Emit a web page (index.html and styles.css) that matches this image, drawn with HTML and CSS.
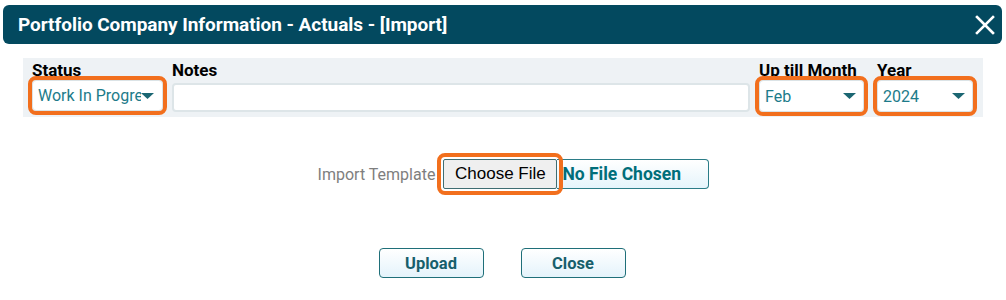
FILE: index.html
```html
<!DOCTYPE html>
<html lang="en">
<head>
  <meta charset="UTF-8">
  <meta name="viewport" content="width=device-width, initial-scale=1.0">
  <title>Portfolio Company Information - Actuals - [Import]</title>
  <link rel="stylesheet" href="styles.css">
</head>
<body>
  <div class="dialog">
    <!-- Title bar -->
    <div class="dialog-header">
      <span class="dialog-title">Portfolio Company Information - Actuals - [Import]</span>
      <button class="dialog-close" title="Close">
        <svg width="20" height="20" viewBox="0 0 20 20">
          <path d="M2 2 L18 18 M18 2 L2 18" stroke="#fff" stroke-width="2.6" stroke-linecap="square"/>
        </svg>
      </button>
    </div>

    <!-- Filters -->
    <div class="filter-panel">
      <div class="field field-status">
        <label class="field-label">Status</label>
        <div class="dropdown highlight status-dropdown">
          <span class="dropdown-text">Work In Progress</span>
          <svg class="dropdown-arrow" width="13" height="6" viewBox="0 0 13 6"><path d="M0 0 H13 L6.5 6 Z"/></svg>
        </div>
      </div>
      <div class="field field-notes">
        <label class="field-label">Notes</label>
        <input class="notes-input" type="text">
      </div>
      <div class="field field-month">
        <label class="field-label">Up till Month</label>
        <div class="dropdown highlight">
          <span class="dropdown-text">Feb</span>
          <svg class="dropdown-arrow" width="13" height="6" viewBox="0 0 13 6"><path d="M0 0 H13 L6.5 6 Z"/></svg>
        </div>
      </div>
      <div class="field field-year">
        <label class="field-label">Year</label>
        <div class="dropdown highlight">
          <span class="dropdown-text">2024</span>
          <svg class="dropdown-arrow" width="13" height="6" viewBox="0 0 13 6"><path d="M0 0 H13 L6.5 6 Z"/></svg>
        </div>
      </div>
    </div>

    <!-- File picker -->
    <div class="import-row">
      <span class="import-label">Import Template</span>
      <div class="file-picker">
        <button class="file-button highlight">Choose File</button>
        <span class="file-name">No File Chosen</span>
      </div>
    </div>

    <!-- Actions -->
    <div class="actions">
      <button class="action-button">Upload</button>
      <button class="action-button">Close</button>
    </div>
  </div>
</body>
</html>
```

FILE: styles.css
```css
body {
  margin: 0;
  padding: 0;
  font-family: Roboto, "Liberation Sans", Arial, sans-serif;
  background: #fff;
}
.dialog {
  width: 1006px;
  height: 300px;
  padding-top: 5px;
  box-sizing: border-box;
}
.dialog-header {
  display: flex;
  align-items: center;
  justify-content: space-between;
  height: 39px;
  margin: 0 4px 0 3px;
  padding: 0 7px 0 15px;
  background: #03495f;
  border-radius: 6px;
}
.dialog-title {
  color: #fff;
  font-size: 19px;
  font-weight: 700;
  letter-spacing: -0.05px;
}
.dialog-close {
  display: flex;
  padding: 0;
  border: none;
  background: none;
  cursor: pointer;
}
.highlight {
  outline: 4px solid #f26f1d;
  outline-offset: 0;
  border-radius: 4px;
}
.filter-panel {
  display: flex;
  gap: 9px;
  margin: 14px 23px 0;
  padding: 5px 10px 5px 9px;
  background: #eef2f5;
}
.field {
  display: flex;
  flex-direction: column;
}
.field-label {
  display: block;
  height: 14px;
  line-height: 14px;
  font-size: 17px;
  font-weight: 700;
  color: #000;
  white-space: nowrap;
}
.field-status { width: 131px; }
.field-notes { flex: 1; }
.field-month { width: 105px; }
.field-year { width: 96px; margin-left: 4px; }
.dropdown {
  display: flex;
  align-items: center;
  height: 32px;
  margin-top: 3px;
  padding: 0 7px 0 5px;
  box-sizing: border-box;
  background: #fff;
  border: 1px solid #dbe3e6;
}
.status-dropdown {
  height: 31px;
  padding-right: 8px;
}
.dropdown-text {
  flex: 1;
  overflow: hidden;
  white-space: nowrap;
  font-size: 16px;
  color: #1d7b8a;
}
.dropdown-arrow {
  flex: none;
  fill: #1b6672;
}
.notes-input {
  height: 29px;
  margin-top: 6px;
  padding: 0 6px;
  box-sizing: border-box;
  border: 2px solid #dde5e8;
  border-radius: 4px;
  background: #fff;
  font: inherit;
  outline: none;
}
.import-row {
  display: flex;
  align-items: center;
  justify-content: center;
  margin-top: 42px;
  padding-left: 21px;
}
.import-label {
  font-size: 16px;
  color: #7e7e7e;
  margin-right: 8px;
}
.file-picker {
  display: flex;
  align-items: stretch;
  height: 30px;
}
.file-button {
  width: 114px;
  padding: 0;
  background: #efefef;
  border: 1px solid #3f6d72;
  border-radius: 2px;
  outline-offset: 2px;
  font-family: "Liberation Sans", Arial, sans-serif;
  font-size: 17px;
  color: #000;
  position: relative;
  z-index: 1;
}
.file-name {
  display: flex;
  align-items: center;
  width: 152px;
  padding-left: 5px;
  box-sizing: border-box;
  border: 1px solid #2b7c87;
  border-left: none;
  border-radius: 0 4px 4px 0;
  background: linear-gradient(#fff, #e5f4fb);
  font-size: 17.5px;
  font-weight: 700;
  color: #006e7a;
}
.actions {
  display: flex;
  justify-content: center;
  gap: 37px;
  margin-top: 59px;
  padding-right: 2px;
}
.action-button {
  width: 105px;
  height: 30px;
  padding: 0;
  border: 1px solid #1f6f79;
  border-radius: 4px;
  background: linear-gradient(#fff, #e4f3fb);
  font-family: Roboto, sans-serif;
  font-size: 16.5px;
  font-weight: 700;
  color: #175f6c;
  cursor: pointer;
}
```
